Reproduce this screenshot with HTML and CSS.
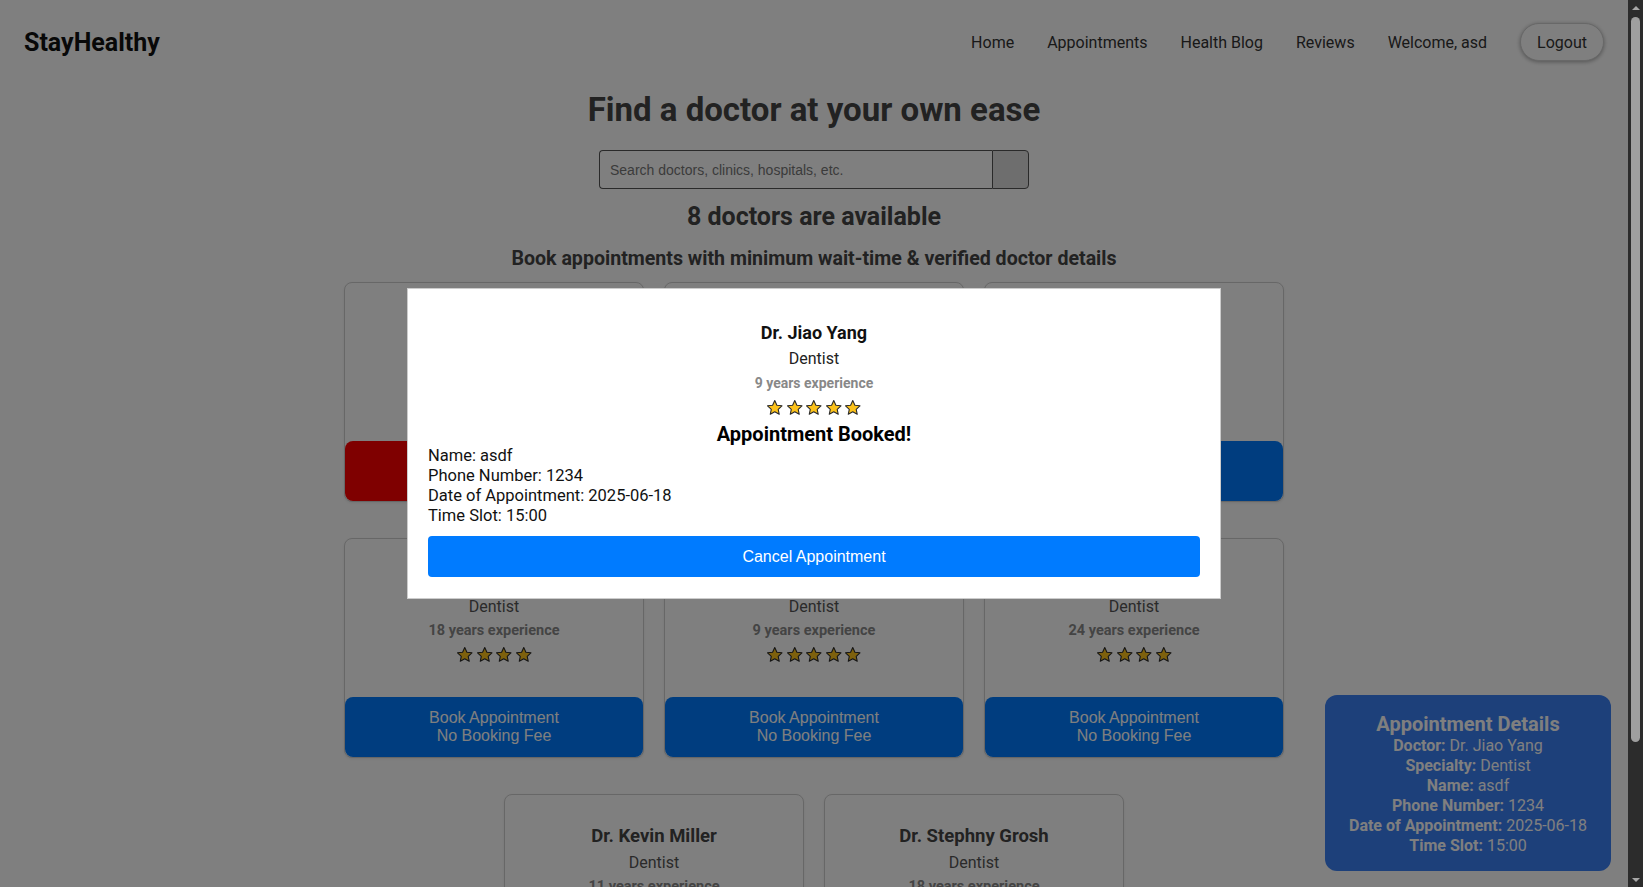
FILE: index.html
```html
<!DOCTYPE html>
<html lang="en">
<head>
<meta charset="utf-8">
<title>StayHealthy</title>
<link rel="stylesheet" href="styles.css">
</head>
<body>
<svg class="defs" width="0" height="0" aria-hidden="true">
  <symbol id="star" viewBox="0 0 24 24">
    <path d="M12 2.2l2.95 6.35 6.95.8-5.15 4.75 1.4 6.85L12 17.5l-6.15 3.45 1.4-6.85L2.1 9.35l6.95-.8z" fill="#fcc21b" stroke="#2a2a2a" stroke-width="1.5" stroke-linejoin="round"/>
  </symbol>
</svg>

<nav class="navbar">
  <div class="logo">StayHealthy</div>
  <ul class="nav-links">
    <li><a href="#">Home</a></li>
    <li><a href="#">Appointments</a></li>
    <li><a href="#">Health Blog</a></li>
    <li><a href="#">Reviews</a></li>
    <li class="welcome">Welcome, asd</li>
    <li><button class="logout-btn">Logout</button></li>
  </ul>
</nav>

<main class="search-page">
  <h1 class="search-title">Find a doctor at your own ease</h1>
  <div class="search-bar">
    <input class="search-input" type="text" placeholder="Search doctors, clinics, hospitals, etc.">
    <button class="search-btn"></button>
  </div>
  <h2 class="count">8 doctors are available</h2>
  <h3 class="subtitle">Book appointments with minimum wait-time &amp; verified doctor details</h3>

  <div class="cards">
    <div class="card">
      <div class="card-info">
        <div class="doc-name">Dr. Jiao Yang</div>
        <div class="doc-spec">Dentist</div>
        <div class="doc-exp">9 years experience</div>
        <div class="stars"><svg class="star"><use href="#star"/></svg><svg class="star"><use href="#star"/></svg><svg class="star"><use href="#star"/></svg><svg class="star"><use href="#star"/></svg><svg class="star"><use href="#star"/></svg></div>
      </div>
      <button class="book-btn cancel">Cancel Appointment<br>No Booking Fee</button>
    </div>
    <div class="card">
      <div class="card-info">
        <div class="doc-name">Dr. Denis Raj</div>
        <div class="doc-spec">Dentist</div>
        <div class="doc-exp">24 years experience</div>
        <div class="stars"><svg class="star"><use href="#star"/></svg><svg class="star"><use href="#star"/></svg><svg class="star"><use href="#star"/></svg><svg class="star"><use href="#star"/></svg></div>
      </div>
      <button class="book-btn">Book Appointment<br>No Booking Fee</button>
    </div>
    <div class="card">
      <div class="card-info">
        <div class="doc-name">Dr. Lyn Christie</div>
        <div class="doc-spec">Dentist</div>
        <div class="doc-exp">11 years experience</div>
        <div class="stars"><svg class="star"><use href="#star"/></svg><svg class="star"><use href="#star"/></svg><svg class="star"><use href="#star"/></svg><svg class="star"><use href="#star"/></svg></div>
      </div>
      <button class="book-btn">Book Appointment<br>No Booking Fee</button>
    </div>

    <div class="card">
      <div class="card-info">
        <div class="doc-name">Dr. Emily Carter</div>
        <div class="doc-spec">Dentist</div>
        <div class="doc-exp">18 years experience</div>
        <div class="stars"><svg class="star"><use href="#star"/></svg><svg class="star"><use href="#star"/></svg><svg class="star"><use href="#star"/></svg><svg class="star"><use href="#star"/></svg></div>
      </div>
      <button class="book-btn">Book Appointment<br>No Booking Fee</button>
    </div>
    <div class="card">
      <div class="card-info">
        <div class="doc-name">Dr. Richard Pearson</div>
        <div class="doc-spec">Dentist</div>
        <div class="doc-exp">9 years experience</div>
        <div class="stars"><svg class="star"><use href="#star"/></svg><svg class="star"><use href="#star"/></svg><svg class="star"><use href="#star"/></svg><svg class="star"><use href="#star"/></svg><svg class="star"><use href="#star"/></svg></div>
      </div>
      <button class="book-btn">Book Appointment<br>No Booking Fee</button>
    </div>
    <div class="card">
      <div class="card-info">
        <div class="doc-name">Dr. Samuel Lee</div>
        <div class="doc-spec">Dentist</div>
        <div class="doc-exp">24 years experience</div>
        <div class="stars"><svg class="star"><use href="#star"/></svg><svg class="star"><use href="#star"/></svg><svg class="star"><use href="#star"/></svg><svg class="star"><use href="#star"/></svg></div>
      </div>
      <button class="book-btn">Book Appointment<br>No Booking Fee</button>
    </div>

    <div class="card">
      <div class="card-info">
        <div class="doc-name">Dr. Kevin Miller</div>
        <div class="doc-spec">Dentist</div>
        <div class="doc-exp">11 years experience</div>
        <div class="stars"><svg class="star"><use href="#star"/></svg><svg class="star"><use href="#star"/></svg><svg class="star"><use href="#star"/></svg><svg class="star"><use href="#star"/></svg></div>
      </div>
      <button class="book-btn">Book Appointment<br>No Booking Fee</button>
    </div>
    <div class="card">
      <div class="card-info">
        <div class="doc-name">Dr. Stephny Grosh</div>
        <div class="doc-spec">Dentist</div>
        <div class="doc-exp">18 years experience</div>
        <div class="stars"><svg class="star"><use href="#star"/></svg><svg class="star"><use href="#star"/></svg><svg class="star"><use href="#star"/></svg><svg class="star"><use href="#star"/></svg></div>
      </div>
      <button class="book-btn">Book Appointment<br>No Booking Fee</button>
    </div>
  </div>
</main>

<aside class="appt-details">
  <div class="appt-title">Appointment Details</div>
  <div class="appt-line"><b>Doctor:</b> Dr. Jiao Yang</div>
  <div class="appt-line"><b>Specialty:</b> Dentist</div>
  <div class="appt-line"><b>Name:</b> asdf</div>
  <div class="appt-line"><b>Phone Number:</b> 1234</div>
  <div class="appt-line"><b>Date of Appointment:</b> 2025-06-18</div>
  <div class="appt-line"><b>Time Slot:</b> 15:00</div>
</aside>

<div class="overlay">
  <div class="modal">
    <div class="m-name">Dr. Jiao Yang</div>
    <div class="m-spec">Dentist</div>
    <div class="m-exp">9 years experience</div>
    <div class="stars m-stars"><svg class="star"><use href="#star"/></svg><svg class="star"><use href="#star"/></svg><svg class="star"><use href="#star"/></svg><svg class="star"><use href="#star"/></svg><svg class="star"><use href="#star"/></svg></div>
    <div class="m-booked">Appointment Booked!</div>
    <div class="m-info">
      <div>Name: asdf</div>
      <div>Phone Number: 1234</div>
      <div>Date of Appointment: 2025-06-18</div>
      <div>Time Slot: 15:00</div>
    </div>
    <button class="m-cancel">Cancel Appointment</button>
  </div>
</div>

<div class="fake-scrollbar" aria-hidden="true">
  <div class="sb-arrow sb-up"></div>
  <div class="sb-track"><div class="sb-thumb"></div></div>
  <div class="sb-arrow sb-down"></div>
</div>
</body>
</html>
```

FILE: styles.css
```css
html {
  background: #fff;
}

body {
  margin: 0;
  padding-right: 15px;
  font-family: Roboto, "Liberation Sans", Arial, sans-serif;
  color: #333;
  background: #fff;
}

.defs {
  position: absolute;
  width: 0;
  height: 0;
}

/* Fake classic scrollbar (drawn over the page edge) */
.fake-scrollbar {
  position: fixed;
  top: 0;
  right: 0;
  bottom: 0;
  width: 15px;
  background: #2c2c2c;
  display: flex;
  flex-direction: column;
  z-index: 30;
}

.sb-arrow {
  height: 15px;
  display: flex;
  align-items: center;
  justify-content: center;
}

.sb-arrow::before {
  content: "";
  width: 0;
  height: 0;
  border-left: 4px solid transparent;
  border-right: 4px solid transparent;
}

.sb-up::before {
  border-bottom: 4px solid #a8a8a8;
}

.sb-down::before {
  border-top: 4px solid #a8a8a8;
}

.sb-track {
  flex: 1;
  padding: 2px 3px;
}

.sb-thumb {
  height: 725px;
  border-radius: 5px;
  background: #9f9f9f;
}

/* Navbar */
.navbar {
  height: 84px;
  padding: 0 24px;
  display: flex;
  align-items: center;
  justify-content: space-between;
}

.logo {
  font-size: 25px;
  font-weight: 700;
  color: #111;
}

.nav-links {
  list-style: none;
  margin: 0;
  padding: 0;
  display: flex;
  align-items: center;
  gap: 33px;
  font-size: 16px;
}

.nav-links a {
  color: #333;
  text-decoration: none;
}

.welcome {
  color: #333;
}

.logout-btn {
  height: 38px;
  padding: 0 16px;
  font-family: Roboto, "Liberation Sans", sans-serif;
  font-size: 16px;
  color: #333;
  background: #fff;
  border: 1px solid #d0d0d0;
  border-radius: 19px;
  box-shadow: 0 1px 4px rgba(0, 0, 0, 0.35);
}

/* Search section */
.search-page {
  padding-top: 7px;
  padding-bottom: 34px;
  text-align: center;
}

.search-title {
  margin: 0;
  font-size: 33px;
  line-height: 38px;
  font-weight: 700;
  color: #444;
}

.search-bar {
  width: 430px;
  height: 39px;
  margin: 21px auto 0;
  display: flex;
}

.search-input {
  flex: 1;
  min-width: 0;
  box-sizing: border-box;
  height: 39px;
  padding: 0 10px;
  border: 1px solid #555;
  border-right: none;
  border-radius: 4px 0 0 4px;
  font-family: "Liberation Sans", Arial, sans-serif;
  font-size: 14px;
  outline: none;
}

.search-input::placeholder {
  color: #777;
}

.search-btn {
  width: 37px;
  height: 39px;
  box-sizing: border-box;
  border: 1px solid #555;
  border-radius: 0 4px 4px 0;
  background: #dcdcdc;
}

.count {
  margin: 13px 0 0;
  font-size: 25px;
  line-height: 30px;
  font-weight: 700;
  color: #444;
}

.subtitle {
  margin: 15px 0 0;
  font-size: 19.6px;
  line-height: 24px;
  font-weight: 700;
  color: #444;
}

/* Cards */
.cards {
  width: 940px;
  margin: 11px auto 0;
  display: flex;
  flex-wrap: wrap;
  justify-content: center;
  gap: 36px 20px;
}

.card {
  width: 300px;
  height: 220px;
  box-sizing: border-box;
  border: 1px solid #cfcfcf;
  border-radius: 8px;
  background: #fff;
  display: flex;
  flex-direction: column;
  box-shadow: 0 1px 3px rgba(0, 0, 0, 0.08);
}

.card-info {
  padding-top: 29px;
}

.doc-name {
  font-size: 18.5px;
  line-height: 24px;
  font-weight: 700;
  color: #444;
}

.doc-spec {
  margin-top: 5px;
  font-size: 16px;
  line-height: 20px;
  color: #555;
}

.doc-exp {
  margin-top: 5px;
  font-size: 14.5px;
  line-height: 18px;
  font-weight: 700;
  color: #888;
}

.stars {
  margin-top: 6px;
  height: 18px;
  display: flex;
  justify-content: center;
  gap: 2px;
}

.star {
  width: 17.5px;
  height: 17.5px;
}

.book-btn {
  margin-top: auto;
  height: 60px;
  border: none;
  border-radius: 8px;
  background: #007bff;
  color: #fff;
  font-family: "Liberation Sans", Arial, sans-serif;
  font-size: 16px;
  line-height: 18px;
}

.book-btn.cancel {
  background: #ff0000;
}

/* Appointment details box */
.appt-details {
  position: fixed;
  right: 32px;
  bottom: 16px;
  width: 256px;
  padding: 17px 15px 15px;
  border-radius: 12px;
  background: #3a80f5;
  color: #fff;
  text-align: center;
  white-space: nowrap;
}

.appt-title {
  font-size: 20px;
  line-height: 24px;
  font-weight: 700;
}

.appt-line {
  font-size: 16px;
  line-height: 20px;
}

/* Overlay + modal */
.overlay {
  position: fixed;
  top: 0;
  left: 0;
  bottom: 0;
  right: 15px;
  background: rgba(0, 0, 0, 0.5);
  display: flex;
  align-items: center;
  justify-content: center;
  z-index: 10;
}

.modal {
  width: 50%;
  box-sizing: border-box;
  padding: 20px;
  background: #fff;
  border: 1px solid #ccc;
  text-align: center;
  color: #111;
}

.m-name {
  margin-top: 12px;
  font-size: 18px;
  line-height: 24px;
  font-weight: 700;
}

.m-spec {
  margin-top: 4px;
  font-size: 16px;
  line-height: 20px;
  color: #222;
}

.m-exp {
  margin-top: 5px;
  font-size: 14px;
  line-height: 18px;
  font-weight: 700;
  color: #888;
}

.m-stars {
  margin-top: 7px;
}

.m-booked {
  margin-top: 5px;
  font-size: 20px;
  line-height: 24px;
  font-weight: 700;
  color: #000;
}

.m-info {
  text-align: left;
  font-size: 16.5px;
  line-height: 20px;
}

.m-cancel {
  display: block;
  width: 100%;
  height: 41px;
  margin-top: 10px;
  margin-bottom: 1px;
  border: none;
  border-radius: 4px;
  background: #007bff;
  color: #fff;
  font-family: "Liberation Sans", Arial, sans-serif;
  font-size: 16px;
}
```
